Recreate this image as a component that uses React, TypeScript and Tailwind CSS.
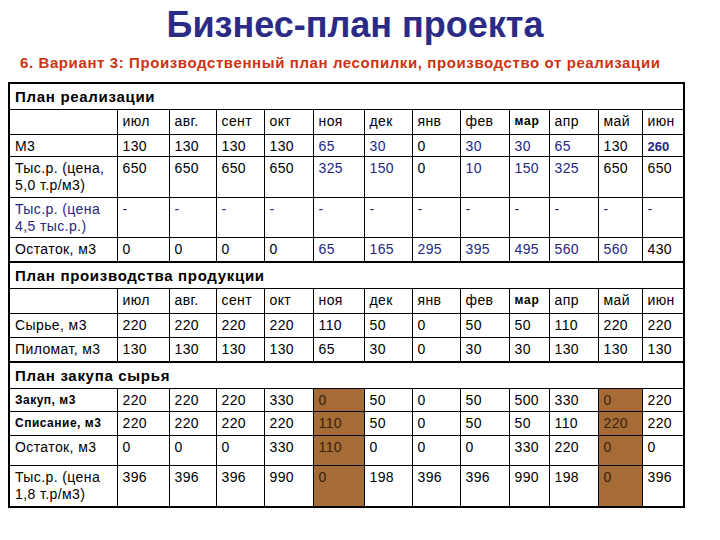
import React from "react";

const months = ["июл", "авг.", "сент", "окт", "ноя", "дек", "янв", "фев", "мар", "апр", "май", "июн"];
const colWidths = [108, 52, 47, 48, 49, 51, 48, 48, 49, 40, 49, 44, 42];

type Cell = { v: string; blue?: boolean; bold?: boolean; brown?: boolean };
type Row = { label: string; labelBlue?: boolean; labelBold?: boolean; h: string; cells: Cell[] };

const c = (v: string, extra: Partial<Cell> = {}): Cell => ({ v, ...extra });
const B = { blue: true };

const sales: Row[] = [
  {
    label: "М3",
    h: "h-[22px]",
    cells: [c("130"), c("130"), c("130"), c("130"), c("65", B), c("30", B), c("0"), c("30", B), c("30", B), c("65", B), c("130"), c("260", { blue: true, bold: true })]
  },
  {
    label: "Тыс.р. (цена, 5,0 т.р/м3)",
    h: "h-[41px]",
    cells: [c("650"), c("650"), c("650"), c("650"), c("325", B), c("150", B), c("0"), c("10", B), c("150", B), c("325", B), c("650"), c("650")]
  },
  {
    label: "Тыс.р. (цена 4,5 тыс.р.)",
    labelBlue: true,
    h: "h-[40px]",
    cells: months.map(() => c("-", B))
  },
  {
    label: "Остаток, м3",
    h: "h-[25px]",
    cells: [c("0"), c("0"), c("0"), c("0"), c("65", B), c("165", B), c("295", B), c("395", B), c("495", B), c("560", B), c("560", B), c("430")]
  }
];

const production: Row[] = [
  {
    label: "Сырье, м3",
    h: "h-[24px]",
    cells: ["220", "220", "220", "220", "110", "50", "0", "50", "50", "110", "220", "220"].map((v) => c(v))
  },
  {
    label: "Пиломат, м3",
    h: "h-[25px]",
    cells: ["130", "130", "130", "130", "65", "30", "0", "30", "30", "130", "130", "130"].map((v) => c(v))
  }
];

const brownCols = [4, 10];
const withBrown = (vals: string[]) => vals.map((v, i) => c(v, { brown: brownCols.includes(i) }));

const purchase: Row[] = [
  { label: "Закуп, м3", labelBold: true, h: "h-[23px]", cells: withBrown(["220", "220", "220", "330", "0", "50", "0", "50", "500", "330", "0", "220"]) },
  { label: "Списание, м3", labelBold: true, h: "h-[24px]", cells: withBrown(["220", "220", "220", "220", "110", "50", "0", "50", "50", "110", "220", "220"]) },
  { label: "Остаток, м3", h: "h-[30px]", cells: withBrown(["0", "0", "0", "330", "110", "0", "0", "0", "330", "220", "0", "0"]) },
  { label: "Тыс.р. (цена 1,8 т.р/м3)", h: "h-[42px]", cells: withBrown(["396", "396", "396", "990", "0", "198", "396", "396", "990", "198", "0", "396"]) }
];

function Section({ title }: { title: string }) {
  return (
    <tr className="h-[26px]">
      <td colSpan={13} className="border-t-2 border-black px-[5px] align-middle text-[15px] font-bold tracking-[0.7px] text-black">
        {title}
      </td>
    </tr>
  );
}

function Header() {
  return (
    <tr className="h-[25px]">
      <td className="border border-black" />
      {months.map((m) => (
        <td
          key={m}
          className={`border border-black px-[5px] align-middle ${m === "мар" ? "text-[12px] font-bold tracking-[0.8px]" : ""}`}
        >
          {m}
        </td>
      ))}
    </tr>
  );
}

function DataRow({ row }: { row: Row }) {
  return (
    <tr className={row.h}>
      <td
        className={`border border-black px-[5px] pt-[3px] align-top ${row.labelBlue ? "text-[#26267e]" : "text-black"} ${
          row.labelBold ? "text-[12px] font-bold tracking-[0.5px]" : ""
        }`}
      >
        {row.label}
      </td>
      {row.cells.map((cell, i) => (
        <td
          key={i}
          className={`border border-black px-[5px] pt-[3px] align-top ${cell.brown ? "bg-[#a56c37] text-[#3b2008]" : ""} ${
            cell.blue ? "text-[#26267e]" : ""
          } ${cell.bold ? "text-[13px] font-bold tracking-normal" : ""}`}
        >
          {cell.v}
        </td>
      ))}
    </tr>
  );
}

export default function App() {
  return (
    <div className="h-[540px] w-[720px] bg-white font-['Liberation_Sans',Arial,sans-serif]">
      <h1 className="pr-[10px] pt-[7px] text-center text-[36px] font-bold leading-none text-[#2b2b86]">
        Бизнес-план проекта
      </h1>
      <p className="mt-[11px] pl-[20px] text-[15px] font-bold leading-[17px] tracking-[0.6px] text-[#cc3311]">
        6. Вариант 3: Производственный план лесопилки, производство от реализации
      </p>
      <table className="ml-[8px] mt-[11px] w-[675px] table-fixed border-collapse border-2 border-black text-[14px] leading-[17px] tracking-[0.4px] text-black">
        <colgroup>
          {colWidths.map((w, i) => (
            <col key={i} style={{ width: w }} />
          ))}
        </colgroup>
        <tbody>
          <Section title="План реализации" />
          <Header />
          {sales.map((r, i) => (
            <DataRow key={i} row={r} />
          ))}
          <Section title="План производства продукции" />
          <Header />
          {production.map((r, i) => (
            <DataRow key={i} row={r} />
          ))}
          <Section title="План закупа сырья" />
          {purchase.map((r, i) => (
            <DataRow key={i} row={r} />
          ))}
        </tbody>
      </table>
    </div>
  );
}
